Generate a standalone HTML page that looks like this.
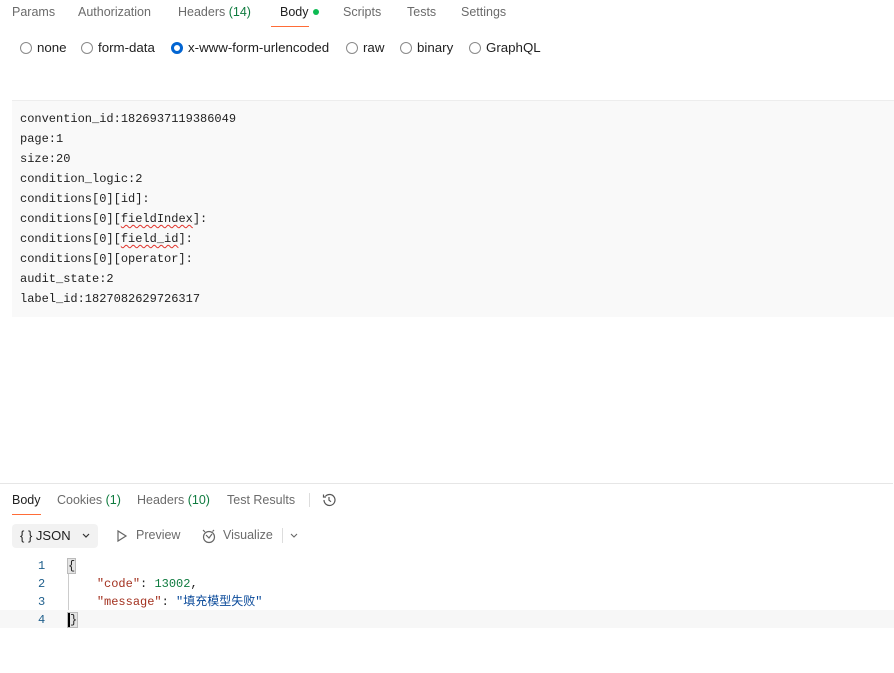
<!DOCTYPE html>
<html><head><meta charset="utf-8"><style>
*{margin:0;padding:0;box-sizing:border-box}
body{width:894px;height:673px;background:#fff;position:relative;overflow:hidden;font-family:"Liberation Sans",sans-serif;font-size:12.5px;color:#6b6b6b}
.a{position:absolute;white-space:nowrap}
.g{color:#0f7b3f}
.radio{position:absolute;width:12px;height:12px;border:1px solid #8a8a8a;border-radius:50%}
.rl{position:absolute;color:#212121;font-size:13.3px}
.mono{font-family:"Liberation Mono",monospace;font-size:12px;color:#212121}
.sq{text-decoration:underline wavy #e0322a;text-decoration-thickness:1px;text-underline-offset:2px}
</style></head><body>
<div class="a" style="left:12px;top:5px">Params</div>
<div class="a" style="left:78px;top:5px">Authorization</div>
<div class="a" style="left:178px;top:5px">Headers <span class="g">(14)</span></div>
<div class="a" style="left:280px;top:5px;color:#212121">Body</div>
<div class="a" style="left:313px;top:9px;width:6px;height:6px;border-radius:50%;background:#0cbb52"></div>
<div class="a" style="left:271px;top:26px;width:38px;height:1px;background:#ff6c37"></div>
<div class="a" style="left:343px;top:5px">Scripts</div>
<div class="a" style="left:407px;top:5px">Tests</div>
<div class="a" style="left:461px;top:5px">Settings</div>

<div class="radio" style="left:20px;top:42px"></div><div class="rl" style="left:37px;top:40px">none</div>
<div class="radio" style="left:81px;top:42px"></div><div class="rl" style="left:98px;top:40px">form-data</div>
<div class="radio" style="left:171px;top:42px;border:3px solid #0265d2"></div><div class="rl" style="left:188px;top:40px">x-www-form-urlencoded</div>
<div class="radio" style="left:346px;top:42px"></div><div class="rl" style="left:363px;top:40px">raw</div>
<div class="radio" style="left:400px;top:42px"></div><div class="rl" style="left:417px;top:40px">binary</div>
<div class="radio" style="left:469px;top:42px"></div><div class="rl" style="left:486px;top:40px">GraphQL</div>

<div class="a" style="left:12px;top:100px;width:882px;height:217px;background:#f9f9f9;border-top:1px solid #ededed"></div>
<div class="a mono" style="left:20px;top:109px;line-height:20px">convention_id:1826937119386049<br>page:1<br>size:20<br>condition_logic:2<br>conditions[0][id]:<br>conditions[0][<span class="sq">fieldIndex</span>]:<br>conditions[0][<span class="sq">field_id</span>]:<br>conditions[0][operator]:<br>audit_state:2<br>label_id:1827082629726317</div>

<div class="a" style="left:0;top:483px;width:893px;height:1px;background:#e6e6e6"></div>
<div class="a" style="left:12px;top:493px;color:#212121">Body</div>
<div class="a" style="left:12px;top:514px;width:29px;height:1px;background:#ff6c37"></div>
<div class="a" style="left:57px;top:493px">Cookies <span class="g">(1)</span></div>
<div class="a" style="left:137px;top:493px">Headers <span class="g">(10)</span></div>
<div class="a" style="left:227px;top:493px">Test Results</div>
<div class="a" style="left:309px;top:493px;width:1px;height:14px;background:#ddd"></div>
<svg class="a" style="left:321px;top:492px" width="16" height="16" viewBox="0 0 16 16" fill="none" stroke="#555" stroke-width="1.2"><path d="M3 8a5.5 5.5 0 1 0 1.6-3.9"/><path d="M2.5 2.5v2.5h2.5"/><path d="M8 5v3.2l2 1.5"/></svg>

<div class="a" style="left:12px;top:524px;width:86px;height:24px;background:#f2f2f2;border-radius:4px"></div>
<div class="a" style="left:20px;top:528px;color:#212121;font-size:13px">{ }&nbsp;JSON</div>
<svg class="a" style="left:81px;top:532px" width="10" height="8" viewBox="0 0 10 8" fill="none" stroke="#333" stroke-width="1.2"><path d="M2 2l3 3 3-3"/></svg>
<svg class="a" style="left:116px;top:529px" width="12" height="14" viewBox="0 0 12 14" fill="none" stroke="#666" stroke-width="1.2"><path d="M2 2v10l8-5z"/></svg>
<div class="a" style="left:136px;top:528px">Preview</div>
<svg class="a" style="left:201px;top:528px" width="16" height="16" viewBox="0 0 16 16" fill="none" stroke="#666" stroke-width="1.2"><circle cx="8" cy="9" r="5.5"/><path d="M5 7l3 3 3-4"/><path d="M2 2l2 2M13 2l-1.5 1.5"/></svg>
<div class="a" style="left:223px;top:528px">Visualize</div>
<div class="a" style="left:282px;top:528px;width:1px;height:15px;background:#ddd"></div>
<svg class="a" style="left:289px;top:532px" width="10" height="8" viewBox="0 0 10 8" fill="none" stroke="#666" stroke-width="1.1"><path d="M2 2l3 3 3-3"/></svg>

<div class="a" style="left:0;top:610px;width:894px;height:18px;background:#f7f7f7"></div>
<div class="a" style="left:68px;top:558px;width:1px;height:52px;background:#ccc"></div>
<div class="a mono" style="left:38px;top:557px;line-height:18px;color:#1f5f8c">1<br>2<br>3<br>4</div>
<div class="a mono" style="left:68px;top:557px;line-height:18px"><span style="background:#e4e4e4;outline:1px solid #bbb">{</span><br>&nbsp;&nbsp;&nbsp;&nbsp;<span style="color:#a3311f">"code"</span>: <span style="color:#0f7b3f">13002</span>,<br>&nbsp;&nbsp;&nbsp;&nbsp;<span style="color:#a3311f">"message"</span>: <span style="color:#0a4a9a;font-family:'Liberation Mono','Noto Sans CJK SC',monospace">"填充模型失败"</span><br><span style="background:#e4e4e4;outline:1px solid #bbb;border-left:2px solid #000">}</span></div>
</body></html>
